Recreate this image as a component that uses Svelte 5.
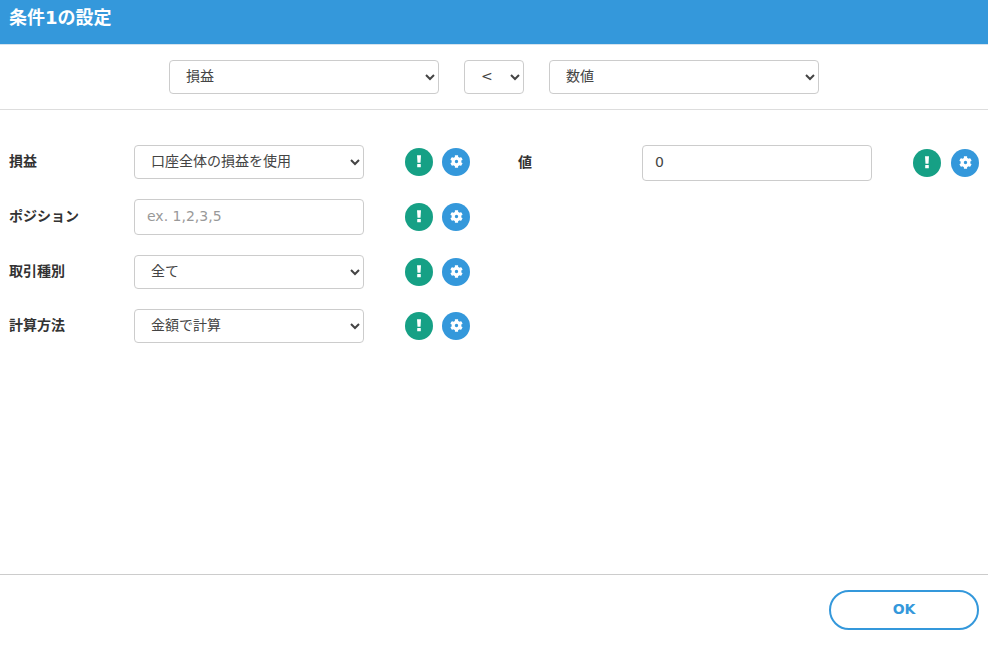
<script>
  const gear = "M487.4 315.7l-42.6-24.6c4.3-23.2 4.3-47 0-70.2l42.6-24.6c4.9-2.8 7.1-8.6 5.5-14-11.1-35.6-30-67.8-54.7-94.6-3.8-4.1-10-5.1-14.8-2.3L380.8 110c-17.9-15.4-38.5-27.3-60.8-35.1V25.8c0-5.6-3.9-10.5-9.4-11.7-36.7-8.2-74.3-7.8-109.2 0-5.5 1.2-9.4 6.1-9.4 11.7V75c-22.2 7.9-42.8 19.8-60.8 35.1L88.7 85.5c-4.9-2.8-11-1.9-14.8 2.3-24.7 26.7-43.6 58.9-54.7 94.6-1.7 5.4.6 11.2 5.5 14L67.3 221c-4.3 23.2-4.3 47 0 70.2l-42.6 24.6c-4.9 2.8-7.1 8.6-5.5 14 11.1 35.6 30 67.8 54.7 94.6 3.8 4.1 10 5.1 14.8 2.3l42.6-24.6c17.9 15.4 38.5 27.3 60.8 35.1v49.2c0 5.6 3.9 10.5 9.4 11.7 36.7 8.2 74.3 7.8 109.2 0 5.5-1.2 9.4-6.1 9.4-11.7v-49.2c22.2-7.9 42.8-19.8 60.8-35.1l42.6 24.6c4.9 2.8 11 1.9 14.8-2.3 24.7-26.7 43.6-58.9 54.7-94.6 1.5-5.5-.7-11.3-5.6-14.1zM256 321c-35.9 0-65-29.1-65-65s29.1-65 65-65 65 29.1 65 65-29.1 65-65 65z";
  const rows = [
    { label: "損益", options: ["口座全体の損益を使用"] },
    { label: "ポジション", placeholder: "ex. 1,2,3,5" },
    { label: "取引種別", options: ["全て"] },
    { label: "計算方法", options: ["金額で計算"] }
  ];
</script>

{#snippet icons()}
  <div class="icons">
    <span class="round green">
      <svg width="6" height="14" viewBox="0 0 6 14" aria-hidden="true">
        <path d="M1 .2h4l-.5 7.6h-3z" fill="#fff" />
        <rect x="1.2" y="9" width="3.6" height="3.2" rx=".5" fill="#fff" />
      </svg>
    </span>
    <span class="round blue">
      <svg class="cog" width="13" height="13" viewBox="0 0 512 512" aria-hidden="true">
        <path d={gear} fill="#fff" />
      </svg>
    </span>
  </div>
{/snippet}

<div class="page">
  <header class="head">条件1の設定</header>

  <div class="top">
    <select class="field wide"><option>損益</option></select>
    <select class="field narrow"><option>&lt;</option></select>
    <select class="field wide"><option>数値</option></select>
  </div>

  <main class="body">
    <section class="col">
      {#each rows as row}
        <div class="row">
          <span class="label">{row.label}</span>
          {#if row.options}
            <select class="field control">
              {#each row.options as o}<option>{o}</option>{/each}
            </select>
          {:else}
            <input class="field control text" placeholder={row.placeholder} />
          {/if}
          {@render icons()}
        </div>
      {/each}
    </section>
    <section class="col right">
      <div class="row">
        <span class="label">値</span>
        <input class="field control text" value="0" />
        {@render icons()}
      </div>
    </section>
  </main>

  <footer class="foot">
    <button class="ok">OK</button>
  </footer>
</div>

<style>
  :global(body) {
    margin: 0;
    background: #fff;
  }
  .page {
    height: 649px;
    display: flex;
    flex-direction: column;
    font-family: "DejaVu Sans", "Noto Sans CJK JP", sans-serif;
    font-size: 14px;
    color: #333;
    box-sizing: border-box;
    overflow: hidden;
  }
  .head {
    height: 44px;
    box-sizing: content-box;
    padding: 0 9px;
    line-height: 35px;
    background: #3498db;
    border-bottom: 1px solid #d5e3ee;
    color: #fff;
    font-size: 18px;
    font-weight: 700;
  }
  .top {
    height: 64px;
    display: flex;
    align-items: center;
    justify-content: center;
    gap: 25px;
    border-bottom: 1px solid #ddd;
    box-sizing: content-box;
  }
  .field {
    box-sizing: border-box;
    height: 34px;
    padding: 0 12px 3px;
    border: 1px solid #ccc;
    border-radius: 4px;
    background: #fff;
    color: #444;
    font: inherit;
    outline: none;
  }
  .wide { width: 270px; }
  .narrow { width: 60px; }
  .body {
    flex: 1;
    display: flex;
    padding: 35px 0 0 9px;
  }
  .col { width: 500px; }
  .right { width: auto; margin-left: 9px; }
  .row {
    display: flex;
    align-items: center;
    margin-bottom: 20px;
  }
  .label {
    width: 125px;
    flex: none;
    font-weight: 700;
    padding-bottom: 5px;
  }
  .right .label { width: 124px; }
  .control { width: 230px; flex: none; }
  .text {
    height: 36px;
    padding: 0 12px 2px;
    font-size: 14px;
  }
  .text::placeholder { color: #999; }
  .icons {
    display: flex;
    gap: 9px;
    margin-left: 41px;
  }
  .right .icons { gap: 10px; }
  .round {
    width: 28px;
    height: 28px;
    border-radius: 50%;
    display: flex;
    align-items: center;
    justify-content: center;
  }
  .cog { margin-bottom: 1px; }
  .green { background: #16a085; }
  .blue { background: #3498db; }
  .foot {
    height: 75px;
    border-top: 1px solid #ccc;
    display: flex;
    justify-content: flex-end;
    padding: 15px 9px 0 0;
    box-sizing: border-box;
  }
  .ok {
    width: 150px;
    height: 40px;
    padding: 0 0 2px;
    border: 2px solid #3498db;
    border-radius: 20px;
    background: #fff;
    color: #3498db;
    font: inherit;
    font-weight: 700;
    font-size: 14px;
  }
</style>
